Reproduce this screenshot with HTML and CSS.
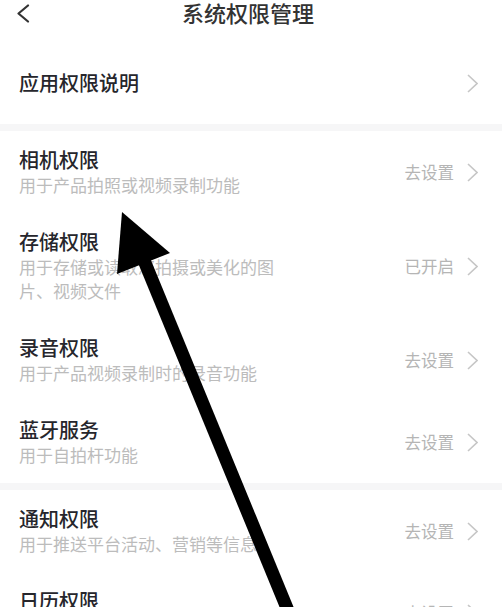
FILE: index.html
```html
<!DOCTYPE html>
<html lang="zh-CN">
<head>
  <meta charset="UTF-8">
  <meta name="viewport" content="width=device-width, initial-scale=1.0">
  <link rel="stylesheet" href="styles.css">
  <title>系统权限管理</title>
</head>
<body>
  <div class="page">
    <div class="header">
      <svg class="back" width="14" height="20" viewBox="0 0 14 20">
        <polyline points="11,1.5 1.5,9.5 11,17.5" fill="none" stroke="#333" stroke-width="2.2" stroke-linecap="round" stroke-linejoin="round"/>
      </svg>
      <h1 class="title">系统权限管理</h1>
    </div>

    <div class="section">
      <div class="row row-simple">
        <div class="row-main"><div class="row-title">应用权限说明</div></div>
        <svg class="chevron" width="11" height="19" viewBox="0 0 11 19"><polyline points="1,1 10,9.5 1,18" fill="none" stroke="#c6c6c6" stroke-width="1.6"/></svg>
      </div>
    </div>

    <div class="band"></div>

    <div class="section">
      <div class="row">
        <div class="row-main">
          <div class="row-title">相机权限</div>
          <div class="row-desc">用于产品拍照或视频录制功能</div>
        </div>
        <span class="status">去设置</span>
        <svg class="chevron" width="11" height="19" viewBox="0 0 11 19"><polyline points="1,1 10,9.5 1,18" fill="none" stroke="#c6c6c6" stroke-width="1.6"/></svg>
      </div>
      <div class="row">
        <div class="row-main">
          <div class="row-title">存储权限</div>
          <div class="row-desc">用于存储或读取您拍摄或美化的图片、视频文件</div>
        </div>
        <span class="status">已开启</span>
        <svg class="chevron" width="11" height="19" viewBox="0 0 11 19"><polyline points="1,1 10,9.5 1,18" fill="none" stroke="#c6c6c6" stroke-width="1.6"/></svg>
      </div>
      <div class="row">
        <div class="row-main">
          <div class="row-title">录音权限</div>
          <div class="row-desc">用于产品视频录制时的录音功能</div>
        </div>
        <span class="status">去设置</span>
        <svg class="chevron" width="11" height="19" viewBox="0 0 11 19"><polyline points="1,1 10,9.5 1,18" fill="none" stroke="#c6c6c6" stroke-width="1.6"/></svg>
      </div>
      <div class="row">
        <div class="row-main">
          <div class="row-title">蓝牙服务</div>
          <div class="row-desc">用于自拍杆功能</div>
        </div>
        <span class="status">去设置</span>
        <svg class="chevron" width="11" height="19" viewBox="0 0 11 19"><polyline points="1,1 10,9.5 1,18" fill="none" stroke="#c6c6c6" stroke-width="1.6"/></svg>
      </div>
    </div>

    <div class="band"></div>

    <div class="section">
      <div class="row">
        <div class="row-main">
          <div class="row-title">通知权限</div>
          <div class="row-desc">用于推送平台活动、营销等信息</div>
        </div>
        <span class="status">去设置</span>
        <svg class="chevron" width="11" height="19" viewBox="0 0 11 19"><polyline points="1,1 10,9.5 1,18" fill="none" stroke="#c6c6c6" stroke-width="1.6"/></svg>
      </div>
      <div class="row">
        <div class="row-main">
          <div class="row-title">日历权限</div>
          <div class="row-desc">用于日程提醒功能</div>
        </div>
        <span class="status">去设置</span>
        <svg class="chevron" width="11" height="19" viewBox="0 0 11 19"><polyline points="1,1 10,9.5 1,18" fill="none" stroke="#c6c6c6" stroke-width="1.6"/></svg>
      </div>
    </div>

    <!-- annotation arrow drawn over the list -->
    <svg class="pointer" width="502" height="607" viewBox="0 0 502 607">
      <line x1="143" y1="258" x2="296" y2="630" stroke="#000" stroke-width="13"/>
      <polygon points="122,212 170,253 117,274" fill="#000"/>
    </svg>
  </div>
</body>
</html>
```

FILE: styles.css
```css
body {
  margin: 0;
  background-color: #fff;
  font-family: "Noto Sans CJK SC", "Noto Sans", sans-serif;
  overflow: hidden;
}

.page {
  position: relative;
  width: 502px;
  height: 607px;
  overflow: hidden;
}

.header {
  display: flex;
  align-items: flex-start;
  justify-content: center;
  height: 42px;
  position: relative;
}

.back {
  position: absolute;
  left: 17px;
  top: 4px;
}

.title {
  margin: 0 6px 0 0;
  font-size: 22px;
  line-height: 28px;
  font-weight: 500;
  color: #333;
  position: relative;
  top: -2px;
}

.band {
  height: 7px;
  background-color: #f6f6f7;
}

.row {
  display: flex;
  align-items: center;
  padding: 16px 24px 16px 19px;
}

.row-simple {
  height: 82px;
  padding-top: 0;
  padding-bottom: 0;
  box-sizing: border-box;
}

.row-main {
  flex-grow: 1;
}

.row-title {
  font-size: 20px;
  line-height: 26px;
  font-weight: 500;
  color: #26262c;
}

.row-desc {
  max-width: 262px;
  font-size: 17px;
  line-height: 24px;
  color: #bcbcbc;
}

.status {
  margin-right: 13px;
  font-size: 16.5px;
  color: #b5b5b5;
}

.chevron {
  display: block;
}

.pointer {
  position: absolute;
  top: 0;
  left: 0;
  pointer-events: none;
}
```
